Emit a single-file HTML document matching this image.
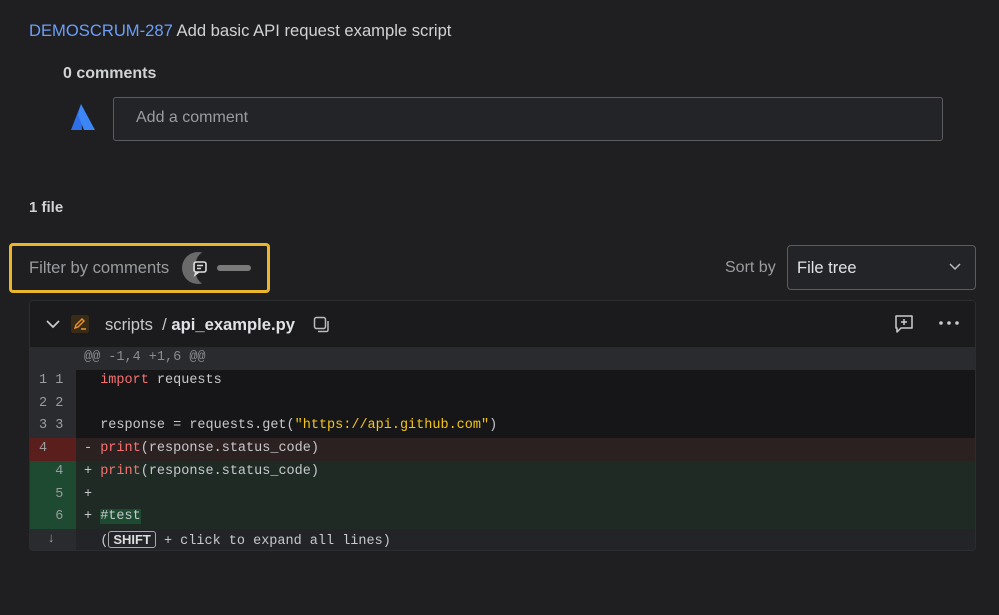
<!DOCTYPE html>
<html><head><style>
*{box-sizing:border-box;margin:0;padding:0}
body{width:999px;height:615px;background:#1f1f21;font-family:"Liberation Sans",sans-serif;color:#c7c9cc;position:relative;overflow:hidden}
.abs{position:absolute}
.mono{font-family:"Liberation Mono",monospace;font-size:13.5px}
.row{position:absolute;left:0;right:0;height:22.75px;line-height:22.75px}
.g{position:absolute;left:0;width:46px;height:100%;color:#9a9ca0;padding-left:9px;white-space:pre}
.c{position:absolute;left:46px;right:0;height:100%;padding-left:8px;white-space:pre;color:#c7c9cc}
.kw{color:#f87171}.str{color:#f5c518}
</style></head><body>
<div class="abs" style="left:29px;top:21px;font-size:16.6px"><span style="color:#6c9ef8">DEMOSCRUM-287</span> <span style="color:#d0d2d5">Add basic API request example script</span></div>
<div class="abs" style="left:63px;top:65px;font-size:16px;font-weight:bold;color:#d0d2d5">0 comments</div>
<svg class="abs" style="left:68px;top:103px" width="28" height="28" viewBox="0 0 28 28"><path d="M13 1 L3 27 L14 27 Z" fill="#2f6fe8"/><path d="M13 1 L27 27 L16 27 L10 12 Z" fill="#3d86f5"/></svg>
<div class="abs" style="left:113px;top:97px;width:830px;height:44px;border:1px solid #5a5c60;border-radius:3px;background:#232427;padding:11px 22px;font-size:16px;color:#9a9ca0">Add a comment</div>
<div class="abs" style="left:29px;top:199px;font-size:15px;font-weight:bold;color:#d0d2d5">1 file</div>
<div class="abs" style="left:9px;top:243px;width:261px;height:50px;border:3px solid #eab72a;border-radius:4px"></div>
<div class="abs" style="left:29px;top:258px;font-size:16.6px;color:#9a9ca0">Filter by comments</div>
<svg class="abs" style="left:181px;top:251px" width="72" height="34" viewBox="0 0 72 34"><ellipse cx="17" cy="17" rx="16" ry="16" fill="#6a6a6a"/><ellipse cx="24" cy="17" rx="10" ry="16" fill="#1f1f21"/><rect x="36" y="14" width="34" height="6" rx="3" fill="#7a7a7a"/><rect x="13" y="11" width="12" height="10" rx="2" fill="none" stroke="#ddd" stroke-width="1.6"/><path d="M15 21 L14 24 L18 21" fill="none" stroke="#ddd" stroke-width="1.5"/><path d="M16 14.5h6M16 17.5h4" stroke="#ddd" stroke-width="1.4"/></svg>
<div class="abs" style="left:725px;top:259px;font-size:16px;color:#9a9ca0">Sort by</div>
<div class="abs" style="left:787px;top:245px;width:189px;height:45px;border:1px solid #5a5c60;border-radius:4px;background:#232427;padding:13px 9px;font-size:16.5px;color:#e0e2e5">File tree</div>
<svg class="abs" style="left:948px;top:262px" width="14" height="10"><path d="M2 2 L7 7 L12 2" fill="none" stroke="#bbb" stroke-width="1.5"/></svg>
<div class="abs" style="left:29px;top:300px;width:947px;height:251px;border:1px solid #2c2d30;border-radius:4px;background:#161618;overflow:hidden">
 <div class="abs" style="left:0;top:0;right:0;height:46px;background:#1b1b1d">
  <svg class="abs" style="left:15px;top:18px" width="16" height="10"><path d="M2 2 L8 8 L14 2" fill="none" stroke="#ccc" stroke-width="1.7"/></svg>
  <div class="abs" style="left:41px;top:14px;width:18px;height:18px;background:#3a2a18;border-radius:2px"></div>
  <svg class="abs" style="left:42px;top:15px" width="16" height="16"><path d="M3 12 L4 9 L10 3 L12 5 L6 11 Z" fill="none" stroke="#e8962a" stroke-width="1.4"/><path d="M9 13h5" stroke="#e8962a" stroke-width="1.4"/></svg>
  <div class="abs" style="left:75px;top:14px;font-size:16.6px;color:#c7c9cc">scripts &nbsp;/ <b style="color:#e0e2e5">api_example.py</b></div>
  <svg class="abs" style="left:283px;top:15px" width="18" height="18"><rect x="1.5" y="1.5" width="11" height="11" rx="2" fill="none" stroke="#bbb" stroke-width="1.5"/><path d="M15 5 V14 a1.5 1.5 0 0 1 -1.5 1.5 H5" fill="none" stroke="#bbb" stroke-width="1.5"/></svg>
  <svg class="abs" style="left:864px;top:13px" width="20" height="20"><path d="M2 2 H18 V14 H7 L3 18 V14 H2 Z" fill="none" stroke="#ccc" stroke-width="1.5" stroke-linejoin="round"/><path d="M10 5v6M7 8h6" stroke="#ccc" stroke-width="1.5"/></svg>
  <svg class="abs" style="left:908px;top:19px" width="22" height="6"><circle cx="3" cy="3" r="1.8" fill="#ccc"/><circle cx="11" cy="3" r="1.8" fill="#ccc"/><circle cx="19" cy="3" r="1.8" fill="#ccc"/></svg>
 </div>
 <div class="mono" style="position:absolute;left:0;right:0;top:46px">
  <div class="row" style="top:0;background:#2a2b2e"><div class="g" style="background:#2a2b2e"></div><div class="c" style="color:#8a8c90;padding-left:8px">@@ -1,4 +1,6 @@</div></div>
  <div class="row" style="top:22.75px"><div class="g" style="background:#2a2b2e">1 1</div><div class="c">  <span class="kw">import</span> requests</div></div>
  <div class="row" style="top:45.5px"><div class="g" style="background:#2a2b2e">2 2</div><div class="c"></div></div>
  <div class="row" style="top:68.25px"><div class="g" style="background:#2a2b2e">3 3</div><div class="c">  response = requests.get(<span class="str">"https://api.github.com"</span>)</div></div>
  <div class="row" style="top:91px;background:#2c2121"><div class="g" style="background:#5a1f1c">4</div><div class="c">- <span class="kw">print</span>(response.status_code)</div></div>
  <div class="row" style="top:113.75px;background:#1f2a25"><div class="g" style="background:#1d4a30">  4</div><div class="c">+ <span class="kw">print</span>(response.status_code)</div></div>
  <div class="row" style="top:136.5px;background:#1f2a25"><div class="g" style="background:#1d4a30">  5</div><div class="c">+</div></div>
  <div class="row" style="top:159.25px;background:#1f2a25"><div class="g" style="background:#1d4a30">  6</div><div class="c">+ <span style="background:#1d4a30">#test</span></div></div>
  <div class="row" style="top:182px;background:#232427"><div class="g" style="background:#2a2b2e;padding-left:17px">↓</div><div class="c">  (<span style="font-family:'Liberation Sans',sans-serif;font-weight:bold;font-size:13px;border:1px solid #aaa;border-radius:3px;padding:0 4px;color:#ddd">SHIFT</span> + click to expand all lines)</div></div>
 </div>
</div>
</body></html>
